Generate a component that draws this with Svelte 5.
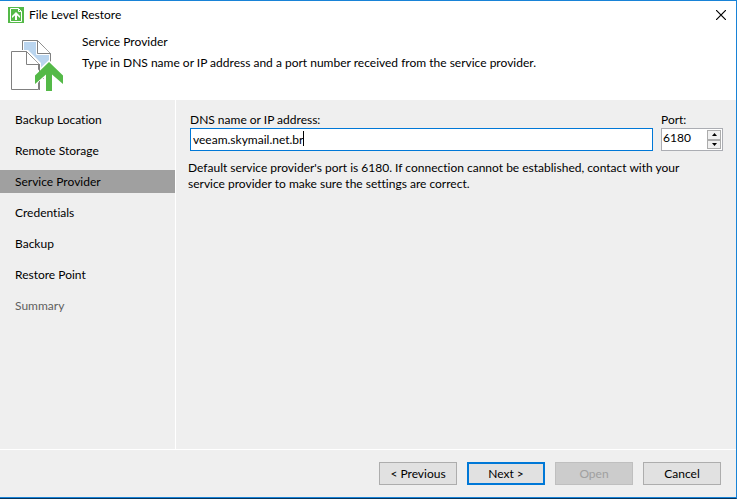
<script>
  const steps = [
    { name: 'Backup Location' },
    { name: 'Remote Storage' },
    { name: 'Service Provider' },
    { name: 'Credentials' },
    { name: 'Backup' },
    { name: 'Restore Point' },
    { name: 'Summary', pending: true },
  ]

  let current = $state(2)
  let address = $state('veeam.skymail.net.br')
  let port = $state('6180')

  function stepPort(by) {
    const next = (parseInt(port, 10) || 0) + by
    port = String(Math.min(65535, Math.max(1, next)))
  }
</script>

<div class="window">
  <header class="titlebar">
    <svg class="app-icon" viewBox="0 0 16 16" width="16" height="16" aria-hidden="true">
      <rect width="16" height="16" fill="#54b948" />
      <path d="M2.500 1.500h8l3 3v10h-11z" fill="#54b948" stroke="#fff" />
      <path d="M10.500 1.500v3h3" fill="none" stroke="#fff" />
      <path d="M8 5l4 4v2l-3-2.500V13H7V8.500L4 11V9z" fill="#fff" />
    </svg>
    <span class="title">File Level Restore</span>
    <button class="close" type="button" aria-label="Close">
      <svg viewBox="0 0 10 10" width="10" height="10" aria-hidden="true">
        <path d="M0 0l10 10M10 0L0 10" stroke="#000" stroke-width="1.200" />
      </svg>
    </button>
  </header>

  <section class="banner">
    <svg class="banner-icon" viewBox="0 0 54 52" width="54" height="52" aria-hidden="true">
      <path d="M12.500 1.500h15l13 13v25h-28z" fill="#bad5ef" stroke="#808080" />
      <path d="M13.500 2.500h13v13h13v23h-26z" fill="none" stroke="#fff" />
      <path d="M28 2v12h12z" fill="#fff" />
      <path d="M27.500 1.500v13h13" fill="none" stroke="#808080" />
      <path d="M28 2l12 12" stroke="#fff" />
      <path d="M28 2l12 12" stroke="#606060" stroke-dasharray="1 0.500" />
      <path d="M0 11h18l13 13v28H0z" fill="#fff" />
      <path d="M1.500 12.500h15l12 12v26h-27z" fill="#fff" stroke="#808080" />
      <path d="M17 13l12 12" stroke="#fff" stroke-width="2" />
      <path d="M17 13l12 12" stroke="#606060" stroke-dasharray="1 0.500" />
      <path d="M16.500 12.500v13h12.500" fill="none" stroke="#808080" />
      <path d="M39 21l16 15v12l-11-9v13H34V39l-10 8V35z" fill="#fff" />
      <path d="M29.500 25v11M29.500 42v9" stroke="#808080" />
      <path d="M39 23l14 13.500V45L42 35.500V52h-6V35.500L25 45v-8.500z" fill="#54b948" />
    </svg>
    <div class="banner-text">
      <h1>Service Provider</h1>
      <p>Type in DNS name or IP address and a port number received from the service provider.</p>
    </div>
  </section>

  <div class="body">
    <nav class="steps">
      {#each steps as step, i (step.name)}
        <button
          type="button"
          class="step"
          class:active={i === current}
          class:pending={step.pending}
          onclick={() => (current = i)}
        >{step.name}</button>
      {/each}
    </nav>

    <main class="page">
      <div class="fields">
        <div class="field grow">
          <label for="address">DNS name or IP address:</label>
          <div class="address-box">
            <input id="address" type="text" spellcheck="false" bind:value={address} />
            <span class="caret" aria-hidden="true"><span>{address}</span></span>
          </div>
        </div>
        <div class="field">
          <label for="port">Port:</label>
          <div class="port-box">
            <input id="port" type="text" inputmode="numeric" bind:value={port} />
            <div class="spinner">
              <button type="button" aria-label="Increase port" onclick={() => stepPort(1)}>
                <svg viewBox="0 0 5 3" width="5" height="3"><path d="M0 3L2.500 0L5 3z" /></svg>
              </button>
              <button type="button" aria-label="Decrease port" onclick={() => stepPort(-1)}>
                <svg viewBox="0 0 5 3" width="5" height="3"><path d="M0 0h5L2.500 3z" /></svg>
              </button>
            </div>
          </div>
        </div>
      </div>
      <p class="hint">
        Default service provider's port is 6180. If connection cannot be established, contact with your service provider to make sure the settings are correct.
      </p>
    </main>
  </div>

  <footer class="actions">
    <button type="button">&lt; Previous</button>
    <button type="button" class="default">Next &gt;</button>
    <button type="button" disabled>Open</button>
    <button type="button">Cancel</button>
  </footer>
</div>

<style>
  :global(body) {
    margin: 0;
    background: #efefef;
  }

  .window {
    box-sizing: border-box;
    min-height: 100vh;
    display: flex;
    flex-direction: column;
    border-top: 1px solid #1883d7;
    border-right: 1px solid #1883d7;
    border-bottom: 1px solid #04335c;
    background: #efefef;
    color: #000;
    font-family: Lato, "Open Sans", sans-serif;
    font-size: 12px;
    font-variant-ligatures: none;
    line-height: 16px;
  }

  button,
  input {
    font: inherit;
    font-variant-ligatures: none;
    color: inherit;
  }

  /* ── Title bar ── */
  .titlebar {
    display: flex;
    align-items: center;
    gap: 5px;
    height: 28px;
    padding: 0 10px 0 8px;
    background: #fff;
  }

  .title {
    flex: 1;
  }

  .close {
    display: flex;
    padding: 0;
    border: none;
    background: none;
  }

  /* ── Banner ── */
  .banner {
    display: flex;
    gap: 18px;
    padding: 5px 10px 9px;
    min-height: 57px;
    background: #fff;
  }

  .banner-icon {
    flex: none;
    margin-top: 5px;
  }

  .banner-text {
    display: flex;
    flex-direction: column;
    gap: 5px;
  }

  h1,
  p {
    margin: 0;
    font-size: inherit;
    font-weight: 400;
  }

  /* ── Steps and page ── */
  .body {
    flex: 1;
    display: flex;
  }

  .steps {
    flex: none;
    box-sizing: border-box;
    width: 176px;
    display: flex;
    flex-direction: column;
    gap: 8px;
    padding-top: 8px;
    border-right: 1px solid #fff;
  }

  .step {
    height: 23px;
    padding: 0 15px;
    border: none;
    background: none;
    text-align: left;
  }

  .step.active {
    background: #a0a0a0;
  }

  .step.pending {
    color: #606060;
  }

  .page {
    flex: 1;
    padding: 12px 13px 12px 12px;
  }

  .fields {
    display: flex;
    gap: 8px;
    padding-left: 2px;
  }

  .field {
    display: flex;
    flex-direction: column;
  }

  .field.grow {
    flex: 1;
  }

  .address-box {
    position: relative;
    display: flex;
  }

  .address-box input {
    box-sizing: border-box;
    width: 100%;
    height: 23px;
    padding: 0 2px;
    border: 1px solid #0078d7;
    border-radius: 0;
    background: #fff;
    outline: none;
  }

  /* text cursor at the end of the address */
  .caret {
    position: absolute;
    top: 3px;
    left: 3px;
    height: 15px;
    border-right: 1px solid #000;
    pointer-events: none;
  }

  .caret span {
    visibility: hidden;
  }

  .port-box {
    box-sizing: border-box;
    display: flex;
    width: 62px;
    height: 23px;
    padding: 1px;
    border: 1px solid #abadb3;
    background: #fff;
  }

  .port-box input {
    flex: 1;
    min-width: 0;
    height: 16px;
    padding: 0;
    border: none;
    background: none;
    outline: none;
  }

  .spinner {
    display: flex;
    flex-direction: column;
    width: 14px;
  }

  .spinner button {
    flex: 1;
    display: flex;
    align-items: center;
    justify-content: center;
    min-height: 0;
    padding: 0;
    border: 1px solid #acacac;
    background: #f0f0f0;
  }

  .hint {
    padding-top: 9px;
    max-width: 512px;
  }

  /* ── Buttons ── */
  .actions {
    display: flex;
    justify-content: flex-end;
    gap: 10px;
    padding: 12px 15px;
    border-top: 1px solid #fff;
    border-bottom: 1px solid #1883d7;
  }

  .actions button {
    box-sizing: border-box;
    width: 78px;
    height: 23px;
    padding: 0;
    border: 1px solid #adadad;
    background: #e1e1e1;
  }

  .actions .default {
    border: 2px solid #0078d7;
  }

  .actions button:disabled {
    border-color: #bfbfbf;
    background: #ccc;
    color: #a0a0a0;
  }
</style>
